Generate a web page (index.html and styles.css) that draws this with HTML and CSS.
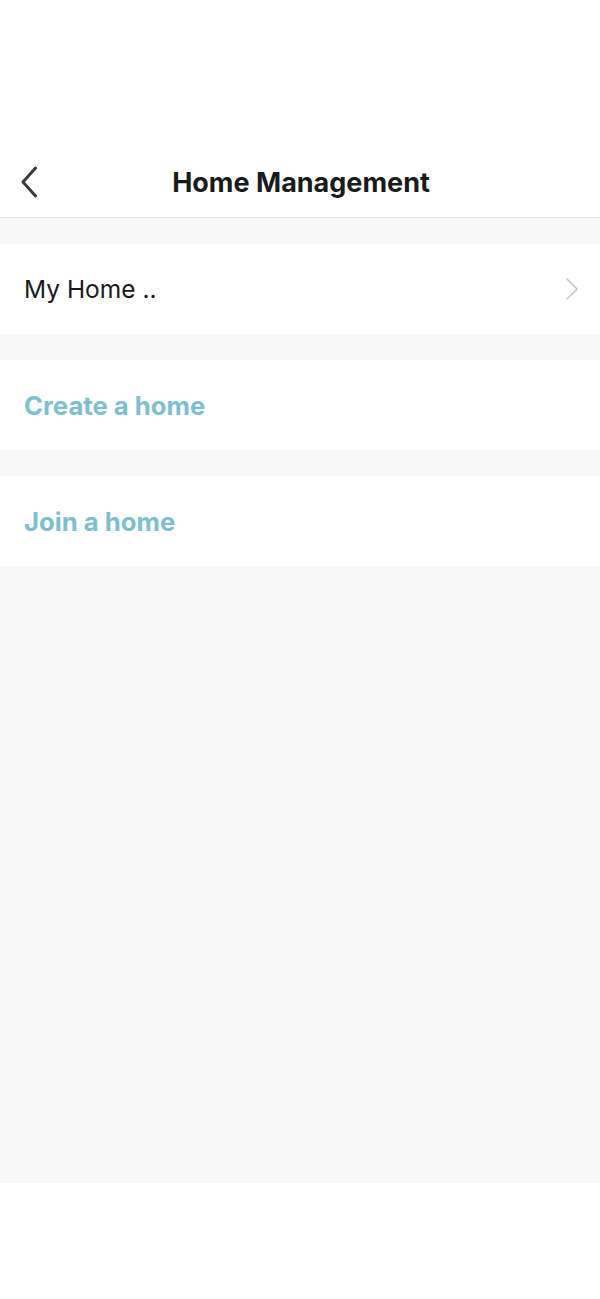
FILE: index.html
```html
<!DOCTYPE html>
<html lang="en">
<head>
<meta charset="utf-8">
<title>Home Management</title>
<link rel="stylesheet" href="styles.css">
</head>
<body>
<div class="app">
  <header class="topbar">
    <button class="back" aria-label="Back">
      <svg width="18" height="32" viewBox="0 0 18 32"><path d="M15.5 2 L3 16 L15.5 30" fill="none" stroke="#3a3a3a" stroke-width="3" stroke-linecap="round" stroke-linejoin="round"/></svg>
    </button>
    <h1 class="title">Home Management</h1>
  </header>
  <main class="content">
    <div class="gap"></div>
    <div class="row">
      <span class="row-label">My Home ..</span>
      <svg class="chev" width="14" height="24" viewBox="0 0 14 24"><path d="M2 2 L12 12 L2 22" fill="none" stroke="#c6c6c6" stroke-width="1.6" stroke-linecap="round" stroke-linejoin="round"/></svg>
    </div>
    <div class="gap"></div>
    <div class="row">
      <span class="row-action">Create a home</span>
    </div>
    <div class="gap"></div>
    <div class="row">
      <span class="row-action">Join a home</span>
    </div>
    <div class="fill"></div>
  </main>
</div>
</body>
</html>
```

FILE: styles.css
```css
html, body {
  margin: 0;
  padding: 0;
  background: #ffffff;
}
body {
  font-family: Inter, "Liberation Sans", Arial, sans-serif;
  color: #1a1a1a;
}
.app {
  width: 600px;
  height: 1299px;
  display: flex;
  flex-direction: column;
}
.topbar {
  height: 217px;
  border-bottom: 1px solid #e4e4e4;
  box-sizing: content-box;
  position: relative;
  display: flex;
  align-items: flex-end;
  justify-content: center;
}
.back {
  position: absolute;
  left: 20px;
  top: 166px;
  width: 18px;
  height: 32px;
  padding: 0;
  margin: 0;
  border: 0;
  background: none;
  display: flex;
}
.title {
  margin: 0 0 17px 2px;
  height: 34px;
  line-height: 34px;
  font-size: 27px;
  font-weight: 700;
  color: #1a1a1a;
}
.content {
  display: flex;
  flex-direction: column;
  flex: 1;
}
.gap {
  height: 26px;
  background: #f8f8f8;
}
.row {
  height: 90px;
  background: #ffffff;
  display: flex;
  align-items: center;
  justify-content: space-between;
  padding: 0 21px 0 24px;
}
.row-label {
  font-size: 24.5px;
  font-weight: 400;
  color: #1a1a1a;
}
.row-action {
  font-size: 25.7px;
  font-weight: 700;
  color: #7dbfcc;
}
.fill {
  height: 617px;
  background: #f8f8f8;
}
```
